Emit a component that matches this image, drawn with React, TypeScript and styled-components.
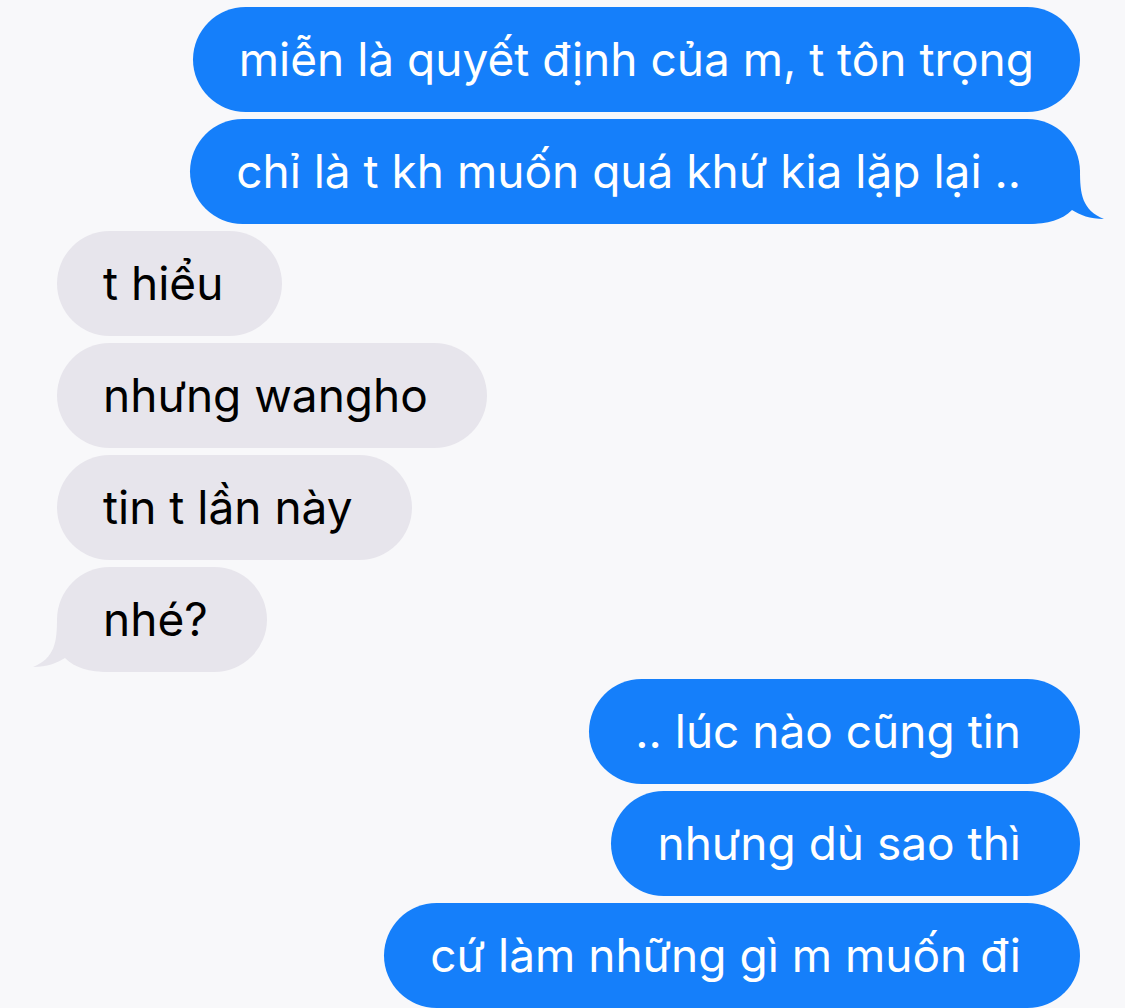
import React from 'react';
import styled, { createGlobalStyle } from 'styled-components';

const GlobalStyle = createGlobalStyle`
  html, body {
    margin: 0;
    padding: 0;
    background: #f8f8fa;
  }
  body {
    font-family: Inter, "Noto Sans", "Liberation Sans", sans-serif;
    -webkit-font-smoothing: antialiased;
  }
`;

const Thread = styled.main`
  width: 1125px;
  height: 1008px;
  overflow: hidden;
  box-sizing: border-box;
  padding: 7px 45px 0 57px;
  display: flex;
  flex-direction: column;
  gap: 7px;
  background: #f8f8fa;
`;

const Row = styled.div<{ $mine: boolean }>`
  display: flex;
  justify-content: ${p => (p.$mine ? 'flex-end' : 'flex-start')};
`;

const Bubble = styled.div<{ $mine: boolean; $full?: boolean }>`
  position: relative;
  isolation: isolate;
  height: 105px;
  line-height: 105px;
  padding: 0 ${p => (p.$full ? 46 : 59)}px 0 46px;
  border-radius: 53px;
  font-size: 46px;
  white-space: nowrap;
  background: ${p => (p.$mine ? '#157ffa' : '#e7e5ec')};
  color: ${p => (p.$mine ? '#ffffff' : '#000000')};
`;

const Tail = styled.svg<{ $mine: boolean }>`
  position: absolute;
  z-index: -1;
  bottom: 0;
  width: 80px;
  height: 56px;
  ${p => (p.$mine ? 'right: -24px;' : 'left: -24px; transform: scaleX(-1);')}
  fill: ${p => (p.$mine ? '#157ffa' : '#e7e5ec')};
`;

type Msg = { text: string; mine: boolean; tail?: boolean; full?: boolean };

const messages: Msg[] = [
  { text: 'miễn là quyết định của m, t tôn trọng', mine: true, full: true },
  { text: 'chỉ là t kh muốn quá khứ kia lặp lại ..', mine: true, tail: true },
  { text: 't hiểu', mine: false },
  { text: 'nhưng wangho', mine: false },
  { text: 'tin t lần này', mine: false },
  { text: 'nhé?', mine: false, tail: true },
  { text: '.. lúc nào cũng tin', mine: true },
  { text: 'nhưng dù sao thì', mine: true },
  { text: 'cứ làm những gì m muốn đi', mine: true },
];

const BubbleTail: React.FC<{ mine: boolean }> = ({ mine }) => (
  <Tail $mine={mine} viewBox="-56 -56 80 56" aria-hidden="true">
    <path d="M 0 -54 C 0 -30 2 -14 24 -5 C 10 -5 0 -9 -8 -14 C -18 -4 -32 0 -52 0 L -52 -54 Z" />
  </Tail>
);

const App: React.FC = () => (
  <>
    <GlobalStyle />
    <Thread>
      {messages.map((m, i) => (
        <Row key={i} $mine={m.mine}>
          <Bubble $mine={m.mine} $full={m.full}>
            {m.text}
            {m.tail && <BubbleTail mine={m.mine} />}
          </Bubble>
        </Row>
      ))}
    </Thread>
  </>
);

export default App;
